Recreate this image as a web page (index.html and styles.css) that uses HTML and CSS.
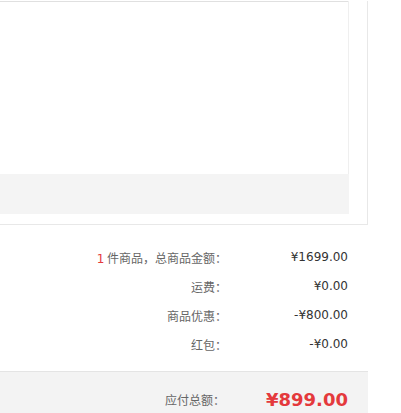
FILE: index.html
```html
<!DOCTYPE html>
<html lang="zh-CN">
<head>
  <meta charset="UTF-8">
  <meta name="viewport" content="width=device-width, initial-scale=1.0">
  <title>订单结算</title>
  <link rel="stylesheet" href="styles.css">
</head>
<body>

<div class="order-box">
  <div class="goods-box">
    <div class="goods-list"></div>
    <div class="goods-foot"></div>
  </div>
</div>

<div class="summary">
  <div class="sum-row">
    <span class="sum-label"><em class="count">1</em> 件商品，总商品金额：</span>
    <span class="sum-value">¥1699.00</span>
  </div>
  <div class="sum-row">
    <span class="sum-label">运费：</span>
    <span class="sum-value">¥0.00</span>
  </div>
  <div class="sum-row">
    <span class="sum-label">商品优惠：</span>
    <span class="sum-value">-¥800.00</span>
  </div>
  <div class="sum-row">
    <span class="sum-label">红包：</span>
    <span class="sum-value">-¥0.00</span>
  </div>
</div>

<div class="total-bar">
  <div class="sum-row">
    <span class="sum-label">应付总额：</span>
    <span class="sum-value total-price">¥899.00</span>
  </div>
</div>

</body>
</html>
```

FILE: styles.css
```css
body {
  margin: 0;
  font-family: "Noto Sans CJK SC", "DejaVu Sans", sans-serif;
  font-size: 12px;
  color: #333;
  background-color: #fff;
}

.order-box {
  width: 367px;
  border-right: 1px solid #e8e8e8;
  border-bottom: 1px solid #e8e8e8;
  padding-bottom: 10px;
}

.goods-box {
  width: 348px;
  border-right: 1px solid #efefef;
}

.goods-list {
  height: 172px;
  margin-top: 1px;
  border-top: 1px solid #e0e0e0;
}

.goods-foot {
  height: 40px;
  margin-right: -1px;
  background-color: #f4f4f4;
}

.summary {
  width: 348px;
  padding: 18px 20px 12px 0;
}

.sum-row {
  display: flex;
  justify-content: flex-end;
  align-items: center;
  height: 29px;
  line-height: 29px;
}

.sum-label {
  color: #666;
  text-align: right;
}

.count {
  font-style: normal;
  color: #e4393c;
  font-family: "DejaVu Sans", sans-serif;
  line-height: 1;
}

.sum-value {
  width: 121px;
  text-align: right;
  font-family: "DejaVu Sans", sans-serif;
  color: #333;
}

.total-bar {
  width: 348px;
  padding: 14px 20px 20px 0;
  border-top: 1px solid #e4e4e4;
  background-color: #f3f3f3;
}

.total-bar .sum-row {
  height: 28px;
  line-height: 28px;
}

.total-bar .sum-value {
  width: 123px;
}

.total-price {
  font-size: 18px;
  font-weight: bold;
  color: #e4393c;
}
```
